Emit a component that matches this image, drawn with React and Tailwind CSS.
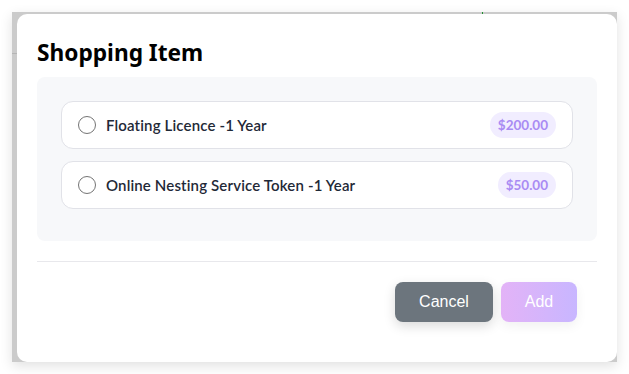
export default function App() {
  const items = [
    { name: "Floating Licence -1 Year", price: "$200.00" },
    { name: "Online Nesting Service Token -1 Year", price: "$50.00" },
  ];
  return (
    <div className="w-[629px] h-[374px] bg-white pl-[12px] pt-[12px] overflow-hidden">
      <div className="relative w-[605px] h-[350px] bg-[#cbcbcb] pl-[5px] pt-[2px] shadow-[0_4px_12px_rgba(0,0,0,0.12)]">
        <div className="absolute left-0 top-[41px] w-[5px] h-px bg-[#b5b5b5]" />
        <div className="absolute left-[470px] top-0 w-px h-[2px] bg-[#1f8f2f]" />
        <div className="w-[600px] h-[348px] bg-white rounded-[10px] pt-[25px] px-[20px] flex flex-col" style={{ fontFamily: "Lato, 'Noto Sans', sans-serif" }}>
          <h2 className="text-[22.7px] leading-[28px] font-bold text-black" style={{ fontFamily: "'Noto Sans', sans-serif" }}>Shopping Item</h2>
          <div className="mt-[10px] bg-[#f7f8fa] rounded-[8px] pt-[24px] pb-[32px] px-[24px] flex flex-col gap-[12px]">
            {items.map((it) => (
              <div key={it.name} className="h-[48px] bg-white border border-[#e1e2e8] rounded-[12px] flex items-center pl-[16px] pr-[16px]">
                <span className="w-[18px] h-[18px] rounded-full border-[1.5px] border-[#747474] bg-white shrink-0" />
                <span className="ml-[10px] text-[15px] font-semibold text-[#1f2937] tracking-[0.15px]">{it.name}</span>
                <span className="ml-auto h-[26px] px-[8px] rounded-full bg-[#f1edff] text-[#a98bf3] text-[13.5px] font-bold flex items-center">{it.price}</span>
              </div>
            ))}
          </div>
          <div className="mt-[20px] h-px bg-[#e8e8ec]" />
          <div className="mt-[20px] flex justify-end gap-[8px] pr-[20px]" style={{ fontFamily: "'Liberation Sans', Arial, sans-serif" }}>
            <button className="w-[98px] h-[40px] rounded-[8px] bg-[#6c757d] text-white text-[16px] shadow-[0_4px_12px_rgba(0,0,0,0.15)]">Cancel</button>
            <button className="w-[76px] h-[40px] rounded-[8px] bg-gradient-to-r from-[#e3b3f7] to-[#c8b6ff] text-white text-[16px] shadow-[0_4px_12px_rgba(0,0,0,0.06)]">Add</button>
          </div>
        </div>
      </div>
    </div>
  );
}
